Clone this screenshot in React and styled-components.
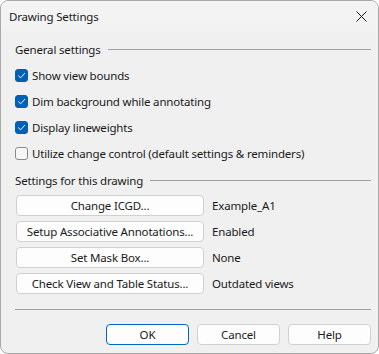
import React, { useState } from 'react';
import styled, { createGlobalStyle } from 'styled-components';

const GlobalStyle = createGlobalStyle`
  html, body {
    margin: 0;
    padding: 0;
    background: #ffffff;
  }
  body {
    font-family: "Noto Sans", "Open Sans", sans-serif;
    font-size: 11.5px;
    letter-spacing: -0.17px;
    color: #1a1a1a;
  }
`;

const Window = styled.div`
  width: 379px;
  height: 354px;
  box-sizing: border-box;
  border: 1px solid #a9a9a9;
  border-radius: 8px;
  overflow: hidden;
  background: #f0f0f0;
  display: flex;
  flex-direction: column;
`;

const TitleBar = styled.div`
  height: 30px;
  background: #f3f3f3;
  display: flex;
  align-items: center;
  justify-content: space-between;
  padding: 0 10px 0 8px;
  flex-shrink: 0;
`;

const Title = styled.span`
  color: #1a1a1a;
`;

const CloseButton = styled.button`
  width: 14px;
  height: 14px;
  padding: 0;
  border: none;
  background: transparent;
  display: flex;
  align-items: center;
  justify-content: center;
  cursor: pointer;
`;

const Body = styled.div`
  flex: 1;
  display: flex;
  flex-direction: column;
  padding: 10px 7px 0 14px;
`;

const GroupHeader = styled.div`
  height: 16px;
  display: flex;
  align-items: center;
  gap: 7px;
  margin-top: ${(p) => p.$top || 0}px;

  &::after {
    content: '';
    flex: 1;
    height: 1px;
    background: #a0a0a0;
  }
`;

const CheckList = styled.div`
  display: flex;
  flex-direction: column;
  margin-top: 5px;
`;

const CheckRow = styled.label`
  height: 26px;
  display: flex;
  align-items: center;
  gap: 4px;
  cursor: pointer;
`;

const Box = styled.span`
  width: 13px;
  height: 13px;
  box-sizing: border-box;
  border-radius: 3px;
  background: ${(p) => (p.$checked ? '#005fb8' : '#f7f7f7')};
  border: 1px solid ${(p) => (p.$checked ? '#005fb8' : '#8b8b8b')};
  display: flex;
  align-items: center;
  justify-content: center;
  flex-shrink: 0;
`;

const ActionList = styled.div`
  display: flex;
  flex-direction: column;
  gap: 5px;
  margin-top: 7px;
`;

const ActionRow = styled.div`
  display: flex;
  align-items: center;
  gap: 8px;
`;

const Button = styled.button`
  height: 21px;
  width: ${(p) => p.$width}px;
  box-sizing: border-box;
  margin-left: ${(p) => p.$indent || 0}px;
  padding: 0;
  font-family: inherit;
  font-size: inherit;
  letter-spacing: inherit;
  color: #1a1a1a;
  background: #fdfdfd;
  border: 1px solid ${(p) => (p.$primary ? '#0067c0' : '#d0d0d0')};
  border-radius: 4px;
  cursor: pointer;
`;

const Value = styled.span``;

const Separator = styled.div`
  height: 1px;
  background: #a0a0a0;
  margin-top: 15px;
`;

const Footer = styled.div`
  display: flex;
  justify-content: flex-end;
  gap: 8px;
  margin-top: 14px;
`;

const CheckMark = () => (
  <svg width="9" height="9" viewBox="0 0 9 9">
    <path d="M1.5 4.8 L3.6 6.8 L7.6 2.4" fill="none" stroke="#ffffff" strokeWidth="1" strokeLinecap="round" strokeLinejoin="round" />
  </svg>
);

const options = [
  { label: 'Show view bounds', checked: true },
  { label: 'Dim background while annotating', checked: true },
  { label: 'Display lineweights', checked: true },
  { label: 'Utilize change control (default settings & reminders)', checked: false },
];

const actions = [
  { label: 'Change ICGD...', value: 'Example_A1' },
  { label: 'Setup Associative Annotations...', value: 'Enabled' },
  { label: 'Set Mask Box...', value: 'None' },
  { label: 'Check View and Table Status...', value: 'Outdated views' },
];

export default function App() {
  const [checks, setChecks] = useState(options.map((o) => o.checked));

  const toggle = (i) => {
    setChecks((prev) => prev.map((c, j) => (j === i ? !c : c)));
  };

  return (
    <>
      <GlobalStyle />
      <Window>
        <TitleBar>
          <Title>Drawing Settings</Title>
          <CloseButton aria-label="Close">
            <svg width="11" height="11" viewBox="0 0 11 11">
              <path d="M0.5 0.5 L10.5 10.5 M10.5 0.5 L0.5 10.5" stroke="#1a1a1a" strokeWidth="1" />
            </svg>
          </CloseButton>
        </TitleBar>
        <Body>
          <GroupHeader>General settings</GroupHeader>
          <CheckList>
            {options.map((o, i) => (
              <CheckRow key={o.label} onClick={() => toggle(i)}>
                <Box $checked={checks[i]}>{checks[i] && <CheckMark />}</Box>
                {o.label}
              </CheckRow>
            ))}
          </CheckList>
          <GroupHeader $top={6}>Settings for this drawing</GroupHeader>
          <ActionList>
            {actions.map((a) => (
              <ActionRow key={a.label}>
                <Button $width={188} $indent={1}>{a.label}</Button>
                <Value>{a.value}</Value>
              </ActionRow>
            ))}
          </ActionList>
          <Separator />
          <Footer>
            <Button $width={83} $primary>OK</Button>
            <Button $width={83}>Cancel</Button>
            <Button $width={83}>Help</Button>
          </Footer>
        </Body>
      </Window>
    </>
  );
}
